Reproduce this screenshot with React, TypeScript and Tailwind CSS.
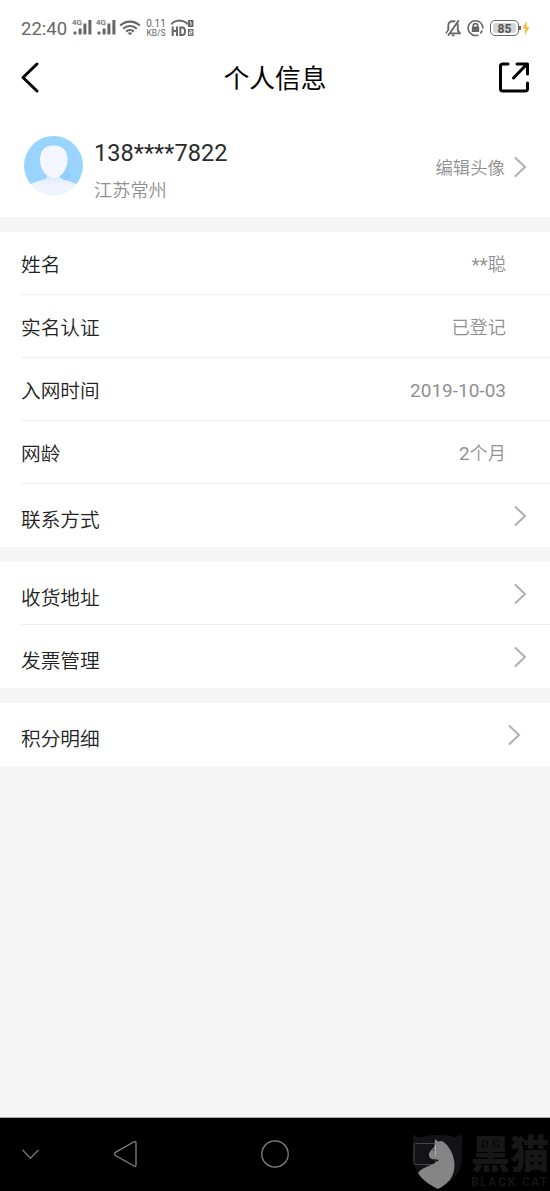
import clsx from "clsx";

type Item = {
  label: string;
  prefix?: string;
  value?: string;
  arrow?: boolean;
  inset?: boolean;
};

const groups: Item[][] = [
  [
    { label: "姓名", prefix: "**", value: "聪" },
    { label: "实名认证", value: "已登记" },
    { label: "入网时间", prefix: "2019-10-03" },
    { label: "网龄", prefix: "2", value: "个月" },
    { label: "联系方式", arrow: true },
  ],
  [
    { label: "收货地址", arrow: true },
    { label: "发票管理", arrow: true },
  ],
  [{ label: "积分明细", arrow: true, inset: true }],
];

function Chevron() {
  return (
    <svg width="14" height="22" viewBox="0 0 14 22" fill="none" stroke="#b0b0b0" strokeWidth="2" strokeLinecap="round">
      <path d="M2.5 2L12 11L2.5 20" />
    </svg>
  );
}

function Signal() {
  return (
    <div className="relative h-[18px] w-5">
      <span className="absolute left-0 top-0 text-[8px] font-medium leading-[7px]">4G</span>
      <svg width="20" height="18" viewBox="0 0 20 18" fill="#666">
        <rect x="1.5" y="12.5" width="3" height="3" rx="1" />
        <rect x="6.6" y="9.5" width="3" height="6" rx="0.5" />
        <rect x="11.4" y="4.5" width="3" height="11" rx="0.5" />
        <rect x="16.4" y="1" width="3" height="14.5" rx="0.5" />
      </svg>
    </div>
  );
}

function StatusBar() {
  return (
    <div className="flex h-[50px] items-center pb-[6px] pl-[21px] pr-[20px] pt-3 text-[#666]">
      <span className="w-[51px] pt-[2px] text-[18.5px] leading-none">22:40</span>
      <div className="flex gap-1">
        <Signal />
        <Signal />
      </div>
      <svg className="ml-[3px]" width="22" height="16" viewBox="0 0 22 16" fill="none" stroke="#666" strokeWidth="2.1">
        <path d="M1.2 5.6C6.8 .3 15.2 .3 20.8 5.6" />
        <path d="M4.2 8.7C8.2 5 13.8 5 17.8 8.7" />
        <path d="M7.2 11.6C9.4 9.6 12.6 9.6 14.8 11.6" />
        <path d="M8.8 12.9Q11 11.4 13.2 12.9L11 15.3Z" fill="#666" stroke="none" />
      </svg>
      <div className="ml-1 w-[22px] whitespace-nowrap text-center text-[8.5px]">
        <div className="text-[10px] leading-[9px]">0.11</div>
        <div className="leading-[10px]">KB/S</div>
      </div>
      <svg className="ml-[4px]" width="24" height="18" viewBox="0 0 24 18" fill="none" stroke="#666" strokeWidth="2">
        <path d="M1.2 5.5V4Q8.5-1 15.8 4V5.5" />
        <path d="M1.7 7.5V17M6 7.5V17M1.7 12H6M9.3 8.4V16.1H11Q14 16.1 14 12.2T11 8.4Z" />
        <path d="M19.7 1V8M19.7 10V17" strokeWidth="5.5" />
        <path d="M18.7 3H20V6.5M18.2 11.8H21V13.4H18.5V15.2H21.3" stroke="#fff" strokeWidth="0.9" />
      </svg>
      <div className="flex-1" />
      <svg width="16" height="18" viewBox="0 0 16 18" fill="none" stroke="#666" strokeWidth="1.9">
        <path d="M1.2 14.4H14.8L12.8 11.3V6.5C12.8 3.7 10.8 2.2 8 2.2S3.3 3.7 3.3 6.5V11.3L1.2 14.4" />
        <path d="M12.5 1L2 15.8" stroke="#fff" strokeWidth="2" />
        <path d="M13.8 1.2L3 16.7M6.7 16.4H9.4" />
      </svg>
      <svg className="ml-[6px]" width="17" height="18" viewBox="0 0 17 18" fill="none" stroke="#666" strokeWidth="1.6">
        <path d="M11.5 15.9A7.4 7.4 0 1 1 15.9 9.5M15.2 11.5L13.5 14.5" />
        <path d="M6.3 8V6.4Q6.3 4.6 8.5 4.6T10.7 6.4V8" />
        <rect x="4.8" y="7.6" width="7.4" height="5.4" rx=".5" fill="#666" stroke="none" />
      </svg>
      <div className="ml-[6px] flex h-4 w-[29px] items-center justify-center rounded-[5px] border border-[#666] p-[2px]">
        <span className="flex h-full w-full items-center justify-center rounded-[3px] bg-[#d5d5d5] pt-px text-[12px] font-bold leading-none text-[#555]">
          85
        </span>
      </div>
      <span className="h-1 w-[2px] bg-[#666]" />
      <svg className="ml-px" width="8" height="14" viewBox="0 0 8 14" fill="#f3bd3d">
        <path d="M4.6 0L.3 7.6H3L2.8 14L7.5 5.9H4.7Z" />
      </svg>
    </div>
  );
}

function Header() {
  return (
    <div className="flex h-[64px] items-start justify-between pl-5 pr-5 pt-[11px]">
      <svg width="20" height="34" viewBox="0 0 20 34" fill="none" stroke="#000" strokeWidth="3" strokeLinecap="round" strokeLinejoin="round">
        <path d="M17 3L3 16.5L17 30" />
      </svg>
      <h1 className="ml-3 mt-px text-[25.7px] leading-[34px] text-black">个人信息</h1>
      <svg width="32" height="34" viewBox="0 0 32 34" fill="none" stroke="#000" strokeWidth="3" strokeLinecap="round" strokeLinejoin="round">
        <path d="M10 3H5Q2.5 3 2.5 5V28Q2.5 30 5 30H27Q29.5 30 29.5 28V22" />
        <path d="M19 3H29.5V13M28.5 3.5L15.5 17" />
      </svg>
    </div>
  );
}

function Profile() {
  return (
    <div className="flex h-[103px] items-start pl-6">
      <svg className="mt-[22px]" width="59" height="59" viewBox="0 0 59 59">
        <defs>
          <clipPath id="avatar">
            <circle cx="29.5" cy="29.5" r="29.5" />
          </clipPath>
          <linearGradient id="neck" x1="0" y1="0" x2="0" y2="1">
            <stop offset="0.2" stopColor="#dbe6fb" />
            <stop offset="0.55" stopColor="#f1f4fd" />
          </linearGradient>
        </defs>
        <g clipPath="url(#avatar)">
          <rect width="59" height="59" fill="#99d4ff" />
          <path d="M34 40L44 29L47 42L36 46Z" fill="#8fcdfb" />
          <path d="M23 36H36V41Q37 43 43 44.5Q51 46.5 56 51V59H3V51Q7 46.5 16 44.5Q23 43 23 41Z" fill="url(#neck)" />
          <path d="M16 24C16 14 21 9.5 29.5 9.5S43.5 14 43.5 24C43.5 34 37 42 30 42S16 34 16 24Z" fill="#f4f7ff" />
        </g>
      </svg>
      <div className="ml-[11px] pt-[21px]">
        <div className="text-[23.6px] leading-[36px] text-[#2b2b2b]">138****7822</div>
        <div className="mt-[6px] text-[18.2px] font-[350] leading-7 text-[#909090]">江苏常州</div>
      </div>
      <div className="ml-auto flex pr-[23px] pt-[39px]">
        <span className="pt-px text-[17.4px] font-[350] leading-7 text-[#909090]">编辑头像</span>
        <span className="ml-2 mt-[3px]">
          <Chevron />
        </span>
      </div>
    </div>
  );
}

function Row({ item, last }: { item: Item; last: boolean }) {
  return (
    <div
      className={clsx(
        "ml-[21px] flex h-[63px] items-center justify-between border-b",
        last ? "border-transparent" : "border-[#eee]",
        item.arrow ? "pt-[12px]" : "pt-[5px]",
        item.inset ? "pr-[29px]" : item.arrow ? "pr-[23px]" : "pr-[44px]"
      )}
    >
      <span className="text-[19.7px] font-[350] leading-7 text-[#222]">{item.label}</span>
      {item.arrow ? (
        <span className="mb-[10px]">
          <Chevron />
        </span>
      ) : (
        <span className="mb-[2px] flex leading-7 text-[#909090]">
          {item.prefix && <span className="text-[19px]">{item.prefix}</span>}
          {item.value && <span className="text-[18.2px] font-[350]">{item.value}</span>}
        </span>
      )}
    </div>
  );
}

function Watermark() {
  return (
    <div className="absolute bottom-0 right-0 flex h-[60px] w-[137px]">
      <svg width="50" height="60" viewBox="0 0 50 60">
        <path d="M0 3Q6 9 12 5Q24 3 38 5Q43 8 49 3V29Q47 48 25 58Q3 48 0 29Z" fill="#131214" />
        <path d="M22 8L25 10.5L29 10C37 15 41.5 25 41.5 34C41.5 46 35 53 25 58C17 54 9 49 5 42C10 35 18 36 26 29C23 28 19 29 17 27C15.5 25 15.5 22 17 21C18.5 18 21.5 17 21.5 14Z" fill="#858585" />
        <rect x="1" y="12.5" width="21.5" height="21" rx="2" fill="none" stroke="#777" strokeOpacity="0.5" />
        <path d="M22.5 14V25" stroke="#aaa" />
        <path d="M19.5 19.5L21.5 18.5" stroke="#444" />
      </svg>
      <div className="ml-[8px] whitespace-nowrap text-[#171717]">
        <div className="mt-[3px] text-[39px] font-black leading-[43px]">黑猫</div>
        <div className="text-[12px] font-medium leading-[11px] tracking-[1.7px]">BLACK CAT</div>
      </div>
    </div>
  );
}

function NavBar() {
  return (
    <div className="relative flex h-[73px] items-center bg-black">
      <svg className="mb-px ml-[21px]" width="19" height="12" viewBox="0 0 19 12" fill="none" stroke="#858585" strokeWidth="1.2">
        <path d="M1.5 1.8L9.5 10.2L17.5 1.8" />
      </svg>
      <svg className="mb-px ml-[72px]" width="26" height="28" viewBox="0 0 26 28" fill="none" stroke="#858585" strokeWidth="1.3">
        <path d="M22 1.8Q24 1 24 3.5V24.5Q24 27 22 26L3.5 15.5Q1.5 14 3.5 12.4Z" />
      </svg>
      <svg className="mb-px ml-[123px]" width="28" height="28" viewBox="0 0 28 28" fill="none" stroke="#858585" strokeWidth="1.3">
        <circle cx="14" cy="14" r="13.2" />
      </svg>
      <Watermark />
    </div>
  );
}

export default function App() {
  return (
    <div className="flex h-[1191px] w-full flex-col overflow-hidden bg-[#f5f5f5] font-[Roboto,'Noto_Sans_CJK_SC',sans-serif]">
      <div className="bg-white">
        <StatusBar />
        <Header />
        <Profile />
      </div>
      {groups.map((items, i) => (
        <div key={i} className="mt-[15px] bg-white">
          {items.map((item, j) => (
            <Row key={item.label} item={item} last={j === items.length - 1} />
          ))}
        </div>
      ))}
      <div className="flex-1 border-b border-[#aaa]" />
      <NavBar />
    </div>
  );
}
